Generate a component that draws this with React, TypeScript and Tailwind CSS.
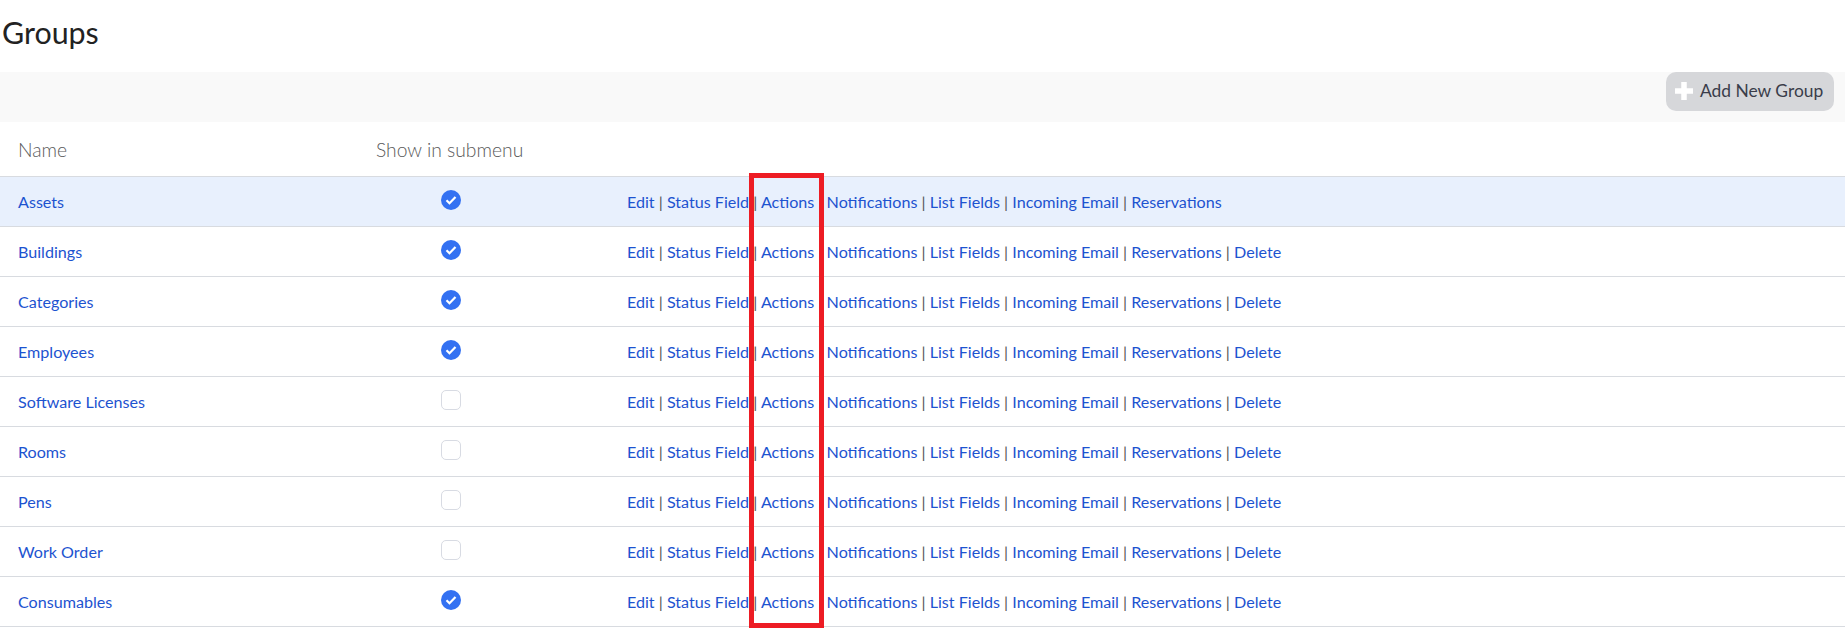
const groups = [
  { name: "Assets", checked: true, del: false },
  { name: "Buildings", checked: true, del: true },
  { name: "Categories", checked: true, del: true },
  { name: "Employees", checked: true, del: true },
  { name: "Software Licenses", checked: false, del: true },
  { name: "Rooms", checked: false, del: true },
  { name: "Pens", checked: false, del: true },
  { name: "Work Order", checked: false, del: true },
  { name: "Consumables", checked: true, del: true },
];

const links = ["Edit", "Status Field", "Actions", "Notifications", "List Fields", "Incoming Email", "Reservations"];

function Check({ on }: { on: boolean }) {
  if (!on) return <div className="h-5 w-5 rounded-[5px] border border-[#d8dbe3] bg-white" />;
  return (
    <svg width="20" height="20" viewBox="0 0 20 20">
      <circle cx="10" cy="10" r="10" fill="#3371f2" />
      <path d="M5.5 10.2l3 3 6-6.2" fill="none" stroke="#fff" strokeWidth="2.2" />
    </svg>
  );
}

export default function App() {
  return (
    <div className="relative h-[631px] w-[1845px] overflow-hidden bg-white font-['Lato','Liberation_Sans',sans-serif] text-[16.13px] text-[#1d53d0]">
      <h1 className="h-[72px] pl-0.5 pt-[13px] text-[30.4px] leading-[38px] text-[#222]">Groups</h1>
      <div className="flex h-[50px] items-start justify-end bg-[#f9f9f9] pr-[11px]">
        <button className="flex h-[39px] w-[168px] items-center gap-[7px] rounded-[10px] bg-[#d6d7da] pb-px pl-[9px] text-[17.4px] text-[#3a3d4a]">
          <svg width="18" height="18" viewBox="0 0 18 18">
            <path d="M9 0v18M0 9h18" stroke="#fff" strokeWidth="5.5" />
          </svg>
          Add New Group
        </button>
      </div>
      <div className="flex h-[54px] items-center pt-0.5 text-[19.3px] font-light text-[#5a5a5a]">
        <div className="w-[376px] pl-[18px]">Name</div>
        <div>Show in submenu</div>
      </div>
      {groups.map((g, i) => (
        <div
          key={g.name}
          className={`flex items-center border-b border-[#d8dbe0] ${i === 0 ? "h-[51px] border-t bg-[#e8f0fd]" : "h-[50px]"}`}
        >
          <div className="w-[433px] pl-[18px] pt-0.5">{g.name}</div>
          <div className="flex w-[194px] justify-start pb-1 pl-[8px]"><Check on={g.checked} /></div>
          <div className="whitespace-pre pt-0.5">
            {links.map((l, j) => (
              <span key={l}>
                {j > 0 && <span className="text-[#555]"> | </span>}
                {l}
              </span>
            ))}
            {g.del && <span><span className="text-[#555]"> | </span>Delete</span>}
          </div>
        </div>
      ))}
      <div className="absolute left-[749px] top-[173px] h-[455px] w-[75px] border-[5px] border-[#ed1c24]" />
    </div>
  );
}
